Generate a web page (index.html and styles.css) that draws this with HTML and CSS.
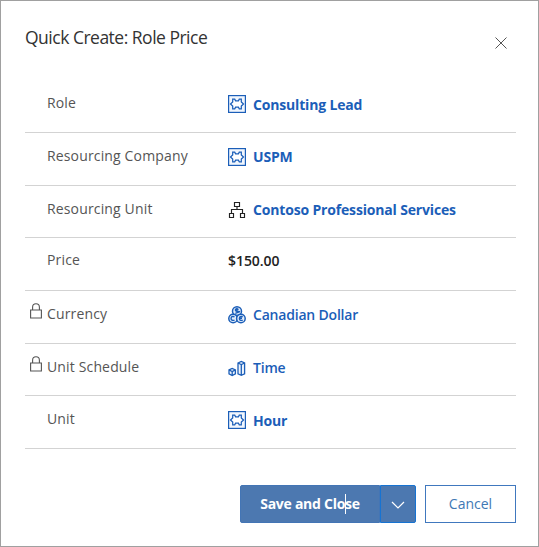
FILE: index.html
```html
<!DOCTYPE html>
<html lang="en">
<head>
<meta charset="utf-8">
<title>Quick Create: Role Price</title>
<link rel="stylesheet" href="styles.css">
</head>
<body>
<svg class="defs" width="0" height="0">
  <symbol id="entity" viewBox="0 0 18 18">
    <rect x=".6" y=".6" width="16.8" height="16.8" fill="#f1f6fd" stroke="currentColor" stroke-width="1.2"/>
    <path d="M4.7 4.2H6.7L7.6 5.9H10.4L11.3 4.2H13.3V6.9L15.5 9L13.3 11.1V13.8H11.3L10.4 12.1H7.6L6.7 13.8H4.7V11.1L2.5 9L4.7 6.9Z" fill="#fff" stroke="currentColor" stroke-width="1.25"/>
  </symbol>
  <symbol id="lock" viewBox="0 0 12 16">
    <path d="M.6 7H11.4V15H.6ZM2.6 7V4.2A3.4 3.4 0 0 1 9.4 4.2V7" fill="none" stroke="currentColor" stroke-width="1.1"/>
  </symbol>
</svg>
<main class="dialog">
  <header class="header">
    <h1 class="title">Quick Create: Role Price</h1>
    <svg class="close" viewBox="0 0 12 12"><path d="M.5.5L11.5 11.5M11.5.5L.5 11.5" stroke="currentColor" fill="none"/></svg>
  </header>
  <section class="fields">
    <div class="row"><span class="lock"></span><span class="label">Role</span><span class="value strong"><svg class="icon"><use href="#entity"/></svg><span class="name">Consulting Lead</span></span></div>
    <div class="row"><span class="lock"></span><span class="label">Resourcing Company</span><span class="value strong"><svg class="icon"><use href="#entity"/></svg><span class="name">USPM</span></span></div>
    <div class="row"><span class="lock"></span><span class="label">Resourcing Unit</span><span class="value strong"><svg class="icon org" viewBox="0 0 18 18"><path d="M6.5 1.5H11.5V5.5H6.5ZM1.5 12.5H5.5V16.5H1.5ZM12.5 12.5H16.5V16.5H12.5ZM9 5.5V9M3.5 12.5V8.5H14.5V12.5" fill="none" stroke="currentColor" stroke-width="1.15"/></svg><span class="name">Contoso Professional Services</span></span></div>
    <div class="row price"><span class="lock"></span><span class="label">Price</span><span class="value amount">$150.00</span></div>
    <div class="row currency"><svg class="lock"><use href="#lock"/></svg><span class="label">Currency</span><span class="value medium"><svg class="icon" viewBox="0 0 18 18"><g fill="#e4eefa" stroke="currentColor" stroke-width="1.5"><circle cx="9" cy="5.3" r="4.5"/><circle cx="5.1" cy="12.5" r="4.3"/><circle cx="12.9" cy="12.5" r="4.3"/></g><path d="M10.6 3.3Q7.4 2.4 7.4 4T10.5 5.5T7.3 7.3M9 1.8V8.4M6.5 10.7Q3.1 9.8 3.1 12.4T6.5 14.2M14.7 10.7Q11.4 9.8 11.4 12.4T14.7 14.2M11 12.3H14" fill="none" stroke="currentColor" stroke-width="1.4"/></svg><span class="name">Canadian Dollar</span></span></div>
    <div class="row"><svg class="lock"><use href="#lock"/></svg><span class="label">Unit Schedule</span><span class="value medium"><svg class="icon" viewBox="0 0 18 18"><path d="M1 10.9L4.2 9.4L7.4 10.9V14.9L4.2 16.6L1 14.9ZM1 10.9L4.2 12.5L7.4 10.9M4.2 12.5V16.4M10 4L13.3 2.5L16.6 4V14.8L13.3 16.4L10 14.8ZM10 4L13.3 5.5L16.6 4M13.3 5.5V16.2" fill="#eef4fc" stroke="currentColor" stroke-width="1.3"/></svg><span class="name">Time</span></span></div>
    <div class="row"><span class="lock"></span><span class="label">Unit</span><span class="value strong"><svg class="icon"><use href="#entity"/></svg><span class="name">Hour</span></span></div>
  </section>
  <footer class="footer">
    <div class="split">
      <button class="save">Save and Clo<i class="caret"></i>se</button>
      <button class="more" aria-label="More"><svg class="chevron" viewBox="0 0 14 8"><path d="M1 1L7 7L13 1" fill="none" stroke="currentColor" stroke-width="1.2"/></svg></button>
    </div>
    <button class="cancel">Cancel</button>
  </footer>
</main>
</body>
</html>
```
FILE: styles.css
```css
* { box-sizing: border-box; }
body { margin: 0; font-family: "Open Sans", "Noto Sans", sans-serif; font-size: 14px; }
.defs { display: block; height: 0; }
.dialog { width: 539px; height: 547px; border: 1px solid #a0a0a0; padding: 0 22px 0 24px; background: #fff; overflow: hidden; }
.header { display: flex; justify-content: space-between; height: 79.3px; padding-top: 22.5px; }
.title { margin: 0; font-size: 17.5px; line-height: 26px; font-weight: 400; letter-spacing: -.5px; color: #333; white-space: nowrap; }
.close { width: 12px; height: 12px; margin: 13.5px 9.5px 0 0; color: #555; }
.row { display: grid; grid-template-columns: 22px 181px 1fr; height: 52.7px; padding-top: 12px; border-bottom: 1px solid #d3d3d3; }
.lock { width: 12px; height: 16px; margin: 0 0 0 5px; color: #555; }
.label { line-height: 22.4px; color: #555; letter-spacing: .15px; white-space: nowrap; }
.value { display: flex; align-items: center; height: 24px; color: #1b5eb8; white-space: nowrap; }
.icon { width: 18px; height: 18px; margin-right: 7px; flex: none; }
.org { color: #222; }
.strong { font-weight: 700; letter-spacing: -.17px; }
.medium { font-weight: 600; letter-spacing: -.2px; }
.amount { color: #222; font-weight: 600; letter-spacing: -.05px; }
.price { padding-top: 10.5px; }
.currency { padding-top: 11.5px; }
.footer { display: flex; justify-content: flex-end; gap: 9px; padding-top: 35.7px; }
.split { display: flex; height: 38px; }
button { font: inherit; padding: 0; height: 38px; }
.save { width: 140px; border: 1px solid #4375b5; border-radius: 2px 0 0 2px; background: #4c78b0; color: #fff; font-weight: 700; letter-spacing: -.27px; }
.caret { display: inline-block; width: 1px; height: 20px; margin: 0 -1px 0 0; background: #fff; vertical-align: -5px; }
.more { width: 36px; border: 1px solid #1673d2; border-radius: 0 2px 2px 0; background: #4c78b0; color: #fff; }
.chevron { width: 14px; height: 8px; }
.cancel { width: 91px; border: 1px solid #4078be; background: #fff; color: #4078b4; }
```
